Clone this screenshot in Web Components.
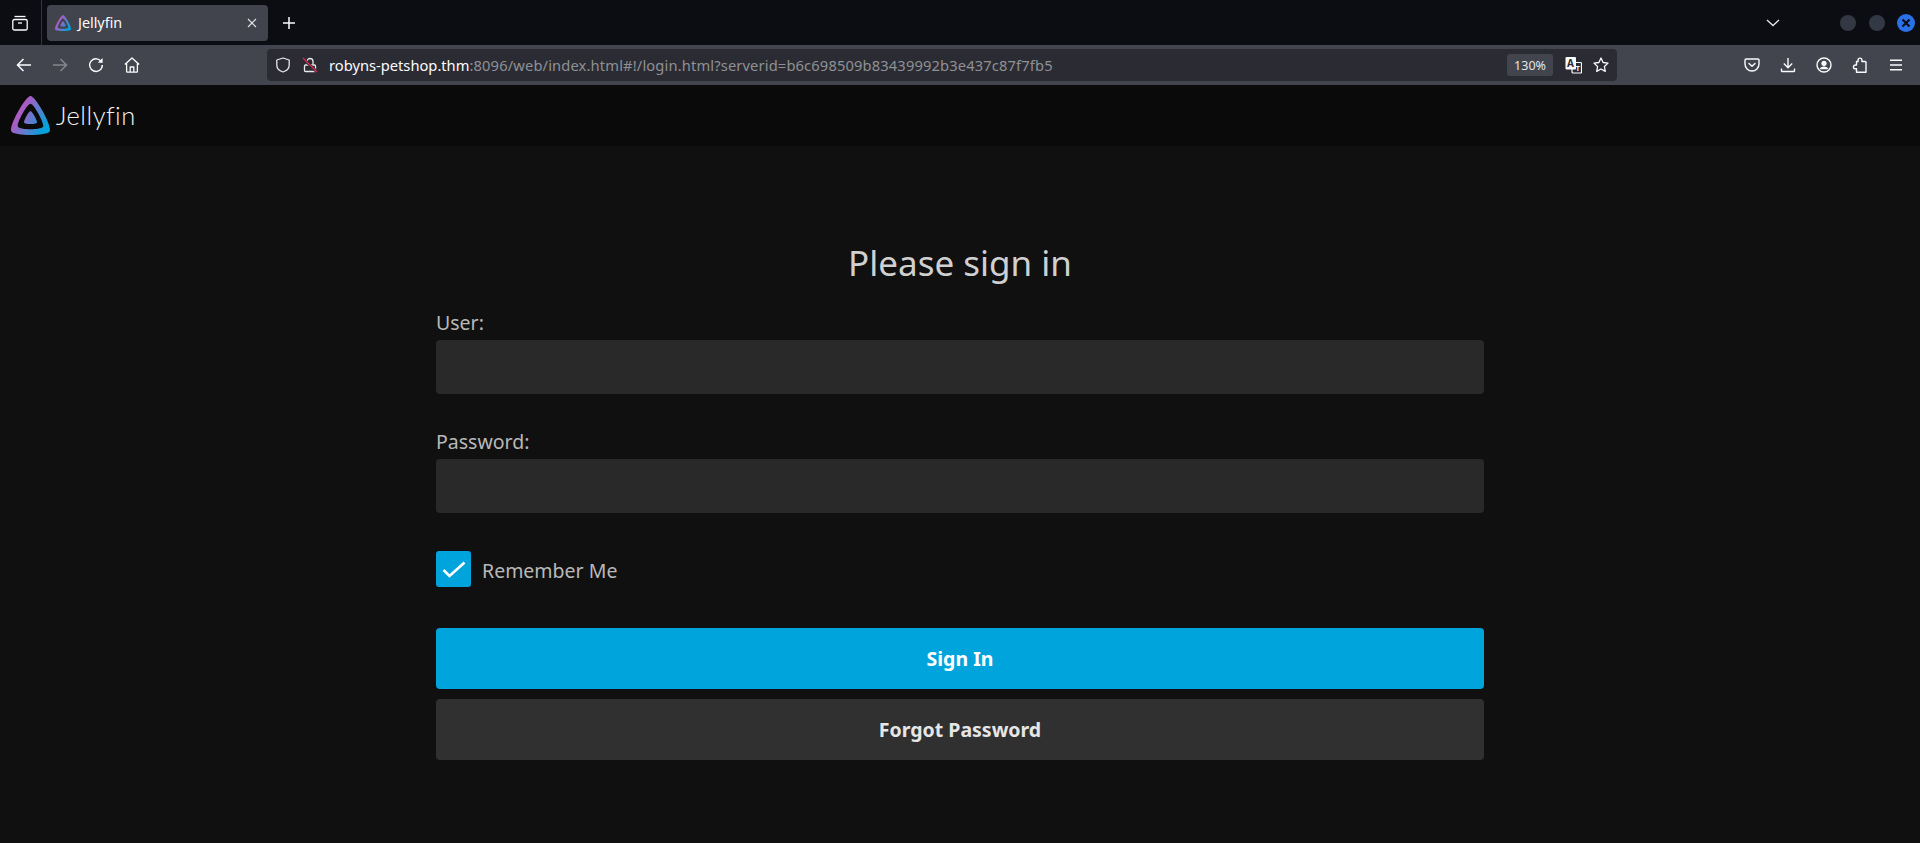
<!DOCTYPE html>
<html>
<head>
<meta charset="utf-8">
<title>Jellyfin</title>
<style>
    html, body { margin: 0; height: 100%; background: #101010; overflow: hidden; }
    body { font-family: "Noto Sans", sans-serif; }
</style>
</head>
<body>

<template id="tabbar">
    <style>
        :host { display: flex; align-items: center; height: 45px; background: #0c0d12; color: #fbfbfe; font: 14.3px "Noto Sans", sans-serif; }
        .views { width: 42px; height: 45px; display: flex; align-items: center; justify-content: center; box-sizing: border-box; border-right: 1px solid #34363d; padding-right: 1px; }
        .tab { margin-left: 5px; width: 221px; height: 36px; background: #42444d; border-radius: 4px; display: flex; align-items: center; padding: 0 10px 0 8px; box-sizing: border-box; }
        .tab span { margin-left: 7px; flex: 1; }
        .plus { margin-left: 10px; width: 22px; display: flex; justify-content: center; }
        .space { flex: 1; }
        .chev { margin-right: 60px; display: flex; }
        .dot { width: 16px; height: 16px; border-radius: 50%; background: #323844; margin-right: 13px; }
        .dot + .dot { margin-right: 12px; }
        .close { width: 18px; height: 18px; border-radius: 50%; background: #2a70e8; margin-right: 5px; display: flex; align-items: center; justify-content: center; }
        svg { display: block; }
    </style>
    <div class="views">
        <svg width="18" height="18" viewBox="0 0 18 18" fill="none" stroke="#fbfbfe" stroke-width="1.3"><path d="M3.5 2.5h11"/><rect x="1.8" y="5.5" width="14.4" height="10.5" rx="1.6"/><path d="M7 9h4"/></svg>
    </div>
    <div class="tab">
        <jf-logo size="16"></jf-logo>
        <span>Jellyfin</span>
        <svg width="12" height="12" viewBox="0 0 12 12" fill="none" stroke="#e2e2e6" stroke-width="1.1"><path d="M2 2l8 8M10 2l-8 8"/></svg>
    </div>
    <div class="plus">
        <svg width="14" height="14" viewBox="0 0 14 14" fill="none" stroke="#fbfbfe" stroke-width="1.5"><path d="M7 1v12M1 7h12"/></svg>
    </div>
    <div class="space"></div>
    <div class="chev">
        <svg width="14" height="8" viewBox="0 0 14 8" fill="none" stroke="#e6e6ea" stroke-width="1.3"><path d="M1 1l6 5.6L13 1"/></svg>
    </div>
    <div class="dot"></div>
    <div class="dot"></div>
    <div class="close">
        <svg width="10" height="10" viewBox="0 0 10 10" fill="none" stroke="#0b0d14" stroke-width="2.1"><path d="M1.5 1.5l7 7M8.500 1.500l-7 7"/></svg>
    </div>
</template>

<template id="toolbar">
    <style>
        :host { display: flex; align-items: center; height: 40px; background: #43454e; padding: 0 6px; box-sizing: border-box; color: #fbfbfe; }
        .btn { width: 36px; height: 40px; display: flex; align-items: center; justify-content: center; flex: none; }
        svg { display: block; }
        .url { margin-left: 117px; width: 1350px; height: 32px; border-radius: 4px; background: #2b2c33; display: flex; align-items: center; box-sizing: border-box; padding: 0 8px; font: 14.7px "Noto Sans", sans-serif; white-space: nowrap; }
        .shield { margin-right: 11px; }
        .lock { margin-right: 11px; }
        .host { color: #fbfbfe; }
        .path { color: #8f9095; flex: 1; letter-spacing: .14px; }
        .zoom { width: 46px; height: 22px; border-radius: 3px; background: #43454e; color: #e4e4e8; font-size: 12.5px; letter-spacing: 0; display: flex; align-items: center; justify-content: center; margin-right: 11px; }
        .tr { margin-right: 11px; }
        .space { flex: 1; }
    </style>
    <div class="btn"><svg width="16" height="16" viewBox="0 0 16 16" fill="none" stroke="#fbfbfe" stroke-width="1.5"><path d="M15 8H1.5M7.5 2L1.500 8l6 6"/></svg></div>
    <div class="btn"><svg width="16" height="16" viewBox="0 0 16 16" fill="none" stroke="#85868b" stroke-width="1.5"><path d="M1 8h13.500M8.500 2l6 6-6 6"/></svg></div>
    <div class="btn"><svg width="16" height="16" viewBox="0 0 16 16" fill="none" stroke="#fbfbfe" stroke-width="1.4"><path d="M13.6 5.2A6.3 6.3 0 1 0 14.3 8"/><path d="M14.6 1v4.8H9.8z" fill="#fbfbfe" stroke="none"/></svg></div>
    <div class="btn"><svg width="16" height="16" viewBox="0 0 16 16" fill="none" stroke="#fbfbfe" stroke-width="1.3" stroke-linejoin="round"><path d="M.8 7.6L8 1l7.200 6.600M2.600 6.400v8a.8.8 0 0 0 .8.8h9.200a.8.8 0 0 0 .8-.8v-8M6.200 15.200V10h3.600v5.200"/></svg></div>
    <div class="url">
        <svg class="shield" width="16" height="16" viewBox="0 0 16 16" fill="none" stroke="#e8e8ec" stroke-width="1.3" stroke-linejoin="round"><path d="M8 1l6.200 2v5c0 3.600-3 6-6.200 7C4.800 14 1.800 11.600 1.800 8V3z"/></svg>
        <svg class="lock" width="16" height="16" viewBox="0 0 16 16" fill="none"><path d="M5 7.500V4.500a3 3 0 0 1 6 0V7.500" stroke="#e8e8ec" stroke-width="1.3"/><rect x="2.500" y="8" width="11" height="6.500" rx="1" stroke="#e8e8ec" stroke-width="1.3"/><path d="M1 1.500l13.500 13" stroke="#2b2c33" stroke-width="3"/><path d="M1 1l14 14" stroke="#e22850" stroke-width="1.2"/></svg>
        <span class="host">robyns-petshop.thm</span><span class="path">:8096/web/index.html#!/login.html?serverid=b6c698509b83439992b3e437c87f7fb5</span>
        <span class="zoom">130%</span>
        <svg class="tr" width="18" height="18" viewBox="0 0 18 18"><rect x="8" y="6.500" width="9.500" height="10.500" rx="1" fill="none" stroke="#fbfbfe" stroke-width="1.2"/><rect x="1.500" y="1" width="10.500" height="12.500" rx="1" fill="#fbfbfe"/><text x="6.500" y="11" text-anchor="middle" font-family="Noto Sans" font-size="10" font-weight="700" fill="#2b2c33">A</text><text x="13.700" y="14.500" text-anchor="middle" font-family="Noto Sans" font-size="7" font-weight="700" fill="#fbfbfe">T</text></svg>
        <svg width="16" height="16" viewBox="0 0 16 16" fill="none" stroke="#fbfbfe" stroke-width="1.3" stroke-linejoin="round"><path d="M8 1l2.100 4.500 4.900.6-3.600 3.400.9 4.900L8 12l-4.300 2.400.9-4.900L1 6.100l4.900-.6z"/></svg>
    </div>
    <div class="space"></div>
    <div class="btn"><svg width="16" height="16" viewBox="0 0 16 16" fill="none" stroke="#fbfbfe" stroke-width="1.4" stroke-linejoin="round"><path d="M2.200 2h11.600a1.200 1.200 0 0 1 1.200 1.200V7a7 7 0 0 1-14 0V3.200A1.200 1.200 0 0 1 2.200 2z"/><path d="M5 6.500L8 9.300l3-2.800" stroke-linecap="round"/></svg></div>
    <div class="btn"><svg width="16" height="16" viewBox="0 0 16 16" fill="none" stroke="#fbfbfe" stroke-width="1.4"><path d="M8 1v9.500M3.800 6.500L8 10.700l4.200-4.200M1.500 11.500v2.300a.8.8 0 0 0 .8.7h11.400a.8.8 0 0 0 .8-.7v-2.300"/></svg></div>
    <div class="btn"><svg width="16" height="16" viewBox="0 0 16 16" fill="none" stroke="#fbfbfe" stroke-width="1.4"><circle cx="8" cy="8" r="7"/><circle cx="8" cy="6.300" r="2.600" fill="#fbfbfe" stroke="none"/><path d="M3.500 12.200c1-1.900 2.600-2.600 4.500-2.600s3.500.7 4.500 2.600z" fill="#fbfbfe" stroke="none"/></svg></div>
    <div class="btn"><svg width="16" height="16" viewBox="0 0 16 16" fill="none" stroke="#fbfbfe" stroke-width="1.4" stroke-linejoin="round"><path d="M9.900 4.500V3a1.900 1.900 0 0 0-3.800 0v1.500H4.500V8H3.400a1.900 1.900 0 0 0 0 3.800h1.100v3.500H14V5.400a.9.9 0 0 0-.9-.9z"/></svg></div>
    <div class="btn"><svg width="16" height="16" viewBox="0 0 16 16" fill="none" stroke="#fbfbfe" stroke-width="1.4"><path d="M2 3.300h12M2 8h12M2 12.700h12"/></svg></div>
</template>

<template id="header">
    <style>
        :host { display: flex; align-items: center; height: 61px; background: #0a0a0b; padding-left: 11px; box-sizing: border-box; }
        span { margin: 0 0 2px 6px; color: #f2f2f2; font: 300 25.5px Lato, sans-serif; letter-spacing: .5px; }
    </style>
    <jf-logo size="39"></jf-logo>
    <span>Jellyfin</span>
</template>

<template id="login">
    <style>
        :host { display: block; width: 1048px; margin: 0 auto; padding-top: 97px; font-family: "Noto Sans", sans-serif; }
        h1 { margin: 0 0 28px; font-size: 35px; line-height: 40px; font-weight: 400; text-align: center; color: #d0d0d0; }
        .check { margin-top: 38px; margin-bottom: 41px; }
        .btns { display: flex; flex-direction: column; gap: 10px; }
    </style>
    <h1>Please sign in</h1>
    <jf-field>User:</jf-field>
    <jf-field>Password:</jf-field>
    <jf-check class="check">Remember Me</jf-check>
    <div class="btns">
        <jf-button primary>Sign In</jf-button>
        <jf-button>Forgot Password</jf-button>
    </div>
</template>

<template id="field">
    <style>
        :host { display: block; margin-bottom: 36px; }
        label { display: block; font-size: 19.5px; line-height: 24px; margin-bottom: 5px; color: #b8b8b8; }
        input { display: block; width: 100%; height: 54px; box-sizing: border-box; border: 0; border-radius: 4px; background: #292929; padding: 0 10px; margin: 0; color: #fff; font: inherit; outline: none; }
    </style>
    <label><slot></slot></label>
    <input type="text">
</template>

<template id="check">
    <style>
        :host { display: flex; align-items: center; height: 36px; font-size: 19.5px; color: #b8b8b8; }
        .box { width: 35px; height: 36px; border-radius: 3px; background: #00a4dc; display: flex; align-items: center; justify-content: center; margin-right: 11px; }
        .text { margin-top: 2px; }
        svg { display: block; }
    </style>
    <div class="box">
        <svg width="24" height="20" viewBox="0 0 24 20" fill="none" stroke="#fff" stroke-width="2.6"><path d="M1.500 11l6 6L22.500 3.500"/></svg>
    </div>
    <span class="text"><slot></slot></span>
</template>

<template id="button">
    <style>
        :host { display: flex; align-items: center; justify-content: center; height: 61px; border-radius: 4px; background: #303030; color: #e6e6e6; font-size: 19.5px; font-weight: 700; }
        :host([primary]) { background: #00a4dc; color: #fff; }
    </style>
    <slot></slot>
</template>

<browser-tabbar></browser-tabbar>
<browser-toolbar></browser-toolbar>
<jf-header></jf-header>
<jf-login></jf-login>

<script>
    // elements that just stamp their template into an open shadow root
    function stamp(tag, id){
        const tpl = document.getElementById(id)
        customElements.define(tag, class extends HTMLElement{
            connectedCallback(){
                if(this.shadowRoot) return
                this.attachShadow({mode:'open'})
                this.shadowRoot.appendChild(tpl.content.cloneNode(true))
            }
        })
    }

    let logoCount = 0
    class JfLogo extends HTMLElement{
        get size(){return this.getAttribute('size')}
        connectedCallback(){
            const gid = 'g' + (++logoCount)
            this.attachShadow({mode:'open'})
            this.shadowRoot.innerHTML = `
                <style>:host{display:block;flex:none;line-height:0}</style>
                <svg width="${this.size}" height="${this.size}" viewBox="0 0 24 24">
                    <defs><linearGradient id="${gid}" gradientUnits="userSpaceOnUse" x1="5.900" y1="10.300" x2="21.500" y2="19.200">
                        <stop offset="0" stop-color="#aa5cc3"/><stop offset="1" stop-color="#00a4dc"/>
                    </linearGradient></defs>
                    <path fill="url(#${gid})" d="M12 .002C8.826.002-1.398 18.537.16 21.666c1.56 3.129 22.14 3.094 23.682 0C25.384 18.573 15.177 0 12 0zm7.760 18.949c-1.008 2.028-14.493 2.050-15.514 0C3.224 16.900 9.920 4.755 12.003 4.755c2.081 0 8.770 12.166 7.759 14.196zM12 9.198c-1.054 0-4.446 6.150-3.930 7.189.518 1.040 7.348 1.027 7.860 0 .511-1.027-2.874-7.190-3.930-7.190z"/>
                </svg>`
        }
    }
    customElements.define('jf-logo', JfLogo)

    stamp('browser-tabbar','tabbar')
    stamp('browser-toolbar','toolbar')
    stamp('jf-header','header')
    stamp('jf-login','login')
    stamp('jf-field','field')
    stamp('jf-check','check')
    stamp('jf-button','button')
</script>
</body>
</html>
